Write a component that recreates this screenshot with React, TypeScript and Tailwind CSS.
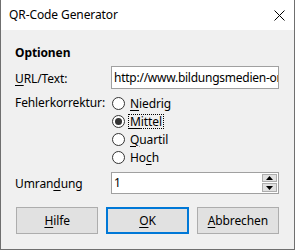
import React from "react";

function U({ children }: { children: React.ReactNode }) {
  return <span className="underline underline-offset-[2px] decoration-[1px]">{children}</span>;
}

function Radio({ checked, label, focus }: { checked?: boolean; label: React.ReactNode; focus?: boolean }) {
  return (
    <div className="flex items-center h-[18px]">
      <div className="w-[13px] h-[13px] rounded-full border border-[#333333] bg-white flex items-center justify-center shrink-0">
        {checked && <div className="w-[7px] h-[7px] rounded-full bg-[#333333]" />}
      </div>
      <div
        className={
          "ml-[3px] px-[1px] leading-[13px] " +
          (focus ? "border border-dotted border-black" : "border border-transparent")
        }
      >
        {label}
      </div>
    </div>
  );
}

function Button({ children, primary }: { children: React.ReactNode; primary?: boolean }) {
  return (
    <div
      className={
        "w-[83px] h-[27px] bg-[#e1e1e1] flex items-center justify-center text-[12px] text-black " +
        (primary ? "border-2 border-[#0078d7]" : "border border-[#adadad]")
      }
    >
      {children}
    </div>
  );
}

export default function App() {
  return (
    <div
      className="w-[295px] h-[250px] flex flex-col bg-[#f0f0f0] border-x border-b border-[#6f6f6f] text-[12px] text-black overflow-hidden tracking-[-0.1px]"
      style={{ fontFamily: "'Noto Sans', 'Open Sans', sans-serif" }}
    >
      <div className="h-[30px] bg-white flex items-center justify-between pl-[8px] pr-[9px] shrink-0">
        <span className="text-[12px] leading-[16px]">QR-Code Generator</span>
        <svg width="11" height="11" viewBox="0 0 11 11">
          <path d="M0.5 0.5 L10.5 10.5 M10.5 0.5 L0.5 10.5" stroke="#000" strokeWidth="1" />
        </svg>
      </div>
      <div className="flex flex-col pl-[14px] pr-[15px]">
        <div className="mt-[15px] h-[16px] leading-[16px] font-bold">Optionen</div>
        <div className="mt-[5px] flex items-center h-[23px]">
          <div className="w-[96px] leading-[16px] pt-[2px]">
            <U>U</U>RL/Text:
          </div>
          <div className="w-[168px] h-[23px] bg-white border border-[#a0a0a0] flex items-center pl-[2px] overflow-hidden whitespace-nowrap tracking-[-0.25px]">
            http://www.bildungsmedien-online.de
          </div>
        </div>
        <div className="mt-[5px] flex">
          <div className="w-[97px] h-[18px] flex items-center leading-[16px]">Fehlerkorrektur:</div>
          <div className="flex flex-col">
            <Radio label={<><U>N</U>iedrig</>} />
            <Radio checked focus label={<><U>M</U>ittel</>} />
            <Radio label={<><U>Q</U>uartil</>} />
            <Radio label={<>Ho<U>c</U>h</>} />
          </div>
        </div>
        <div className="mt-[6px] flex items-center h-[22px]">
          <div className="w-[96px] leading-[16px] pt-[1px]">
            Umran<U>d</U>ung
          </div>
          <div className="w-[168px] h-[22px] bg-white border border-[#a0a0a0] flex items-center justify-between pl-[2px] pr-[1px]">
            <span>1</span>
            <div className="flex flex-col gap-[1px]">
              <div className="w-[15px] h-[8px] bg-[#e1e1e1] border border-[#adadad] flex items-center justify-center">
                <svg width="7" height="4" viewBox="0 0 7 4">
                  <path d="M3.5 0 L7 4 L0 4 Z" fill="#000" />
                </svg>
              </div>
              <div className="w-[15px] h-[9px] bg-[#e1e1e1] border border-[#adadad] flex items-center justify-center">
                <svg width="7" height="4" viewBox="0 0 7 4">
                  <path d="M0 0 L7 0 L3.5 4 Z" fill="#000" />
                </svg>
              </div>
            </div>
          </div>
        </div>
        <div className="mt-[13px] flex gap-[8px] pl-[1px]">
          <Button>
            <U>H</U>ilfe
          </Button>
          <Button primary>
            <U>O</U>K
          </Button>
          <Button>
            <U>A</U>bbrechen
          </Button>
        </div>
      </div>
    </div>
  );
}
